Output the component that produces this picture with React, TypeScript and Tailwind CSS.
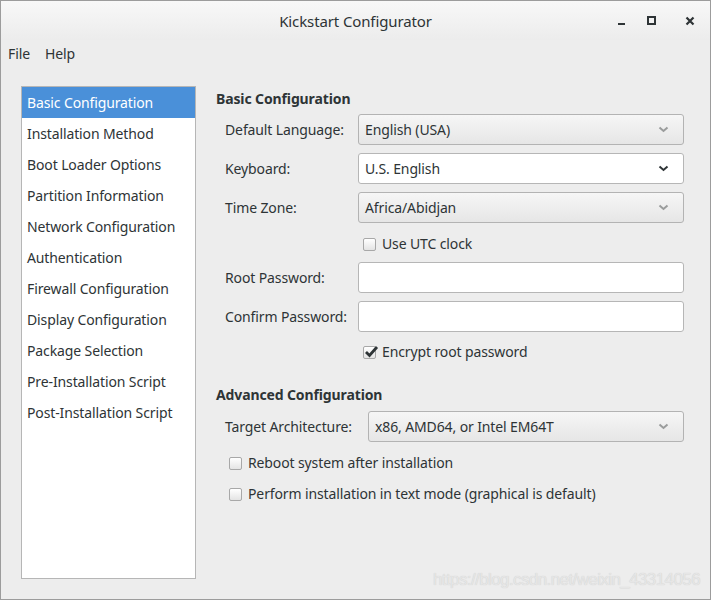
import React from "react";

const sections = [
  "Basic Configuration",
  "Installation Method",
  "Boot Loader Options",
  "Partition Information",
  "Network Configuration",
  "Authentication",
  "Firewall Configuration",
  "Display Configuration",
  "Package Selection",
  "Pre-Installation Script",
  "Post-Installation Script",
];

const Chevron = ({ dark }: { dark?: boolean }) => (
  <svg width="11" height="7" viewBox="0 0 11 7" className="shrink-0">
    <path
      d="M1.5 1.5 L5.5 5 L9.5 1.5"
      fill="none"
      stroke={dark ? "#2e3436" : "#9a9c9c"}
      strokeWidth="2"
    />
  </svg>
);

const Combo = ({ value, dark }: { value: string; dark?: boolean }) => (
  <div
    className={
      "flex items-center justify-between h-[31px] px-[6px] pr-[14px] rounded-[3px] border " +
      (dark
        ? "bg-white border-[#b6b6b6]"
        : "bg-gradient-to-b from-[#f6f6f6] to-[#e6e6e6] border-[#b3b3b3]")
    }
  >
    <span>{value}</span>
    <Chevron dark={dark} />
  </div>
);

const Entry = () => (
  <div className="h-[31px] rounded-[3px] border border-[#b6b6b6] bg-white" />
);

const Check = ({ label, checked }: { label: string; checked?: boolean }) => (
  <div className="flex items-center h-[20px] gap-[6px]">
    <div className="relative w-[13px] h-[13px] rounded-[2px] border border-[#a8a8a8] bg-gradient-to-b from-white to-[#e4e4e4]">
      {checked && (
        <svg
          width="15"
          height="13"
          viewBox="0 0 15 13"
          className="absolute left-[0px] top-[-2px]"
        >
          <path
            d="M2 7 L5.5 10.5 L13 2"
            fill="none"
            stroke="#2e3436"
            strokeWidth="2.8"
          />
        </svg>
      )}
    </div>
    <span>{label}</span>
  </div>
);

export default function App() {
  return (
    <div
      className="w-[711px] h-[600px] flex flex-col bg-[#ededed] border border-[#9c9c9c] text-[#2e3436] text-[14px] leading-[20px] tracking-[-0.12px] overflow-hidden"
      style={{ fontFamily: '"Noto Sans", sans-serif' }}
    >
      {/* Title bar */}
      <div className="h-[39px] grid grid-cols-[1fr_auto_1fr] items-center bg-gradient-to-b from-[#f8f8f8] to-[#ececec]">
        <div />
        <div className="text-[15px] text-[#2e3436]">Kickstart Configurator</div>
        <div className="flex justify-end items-center pr-[15px]">
          <div className="w-[7px] h-[2px] bg-[#2e3436] mt-[6px]" />
          <div className="w-[9px] h-[9px] border-2 border-[#2e3436] ml-[22px]" />
          <svg width="10" height="10" viewBox="0 0 10 10" className="ml-[29px]">
            <path d="M1.5 1.5 L8.5 8.5 M8.5 1.5 L1.5 8.5" stroke="#2e3436" strokeWidth="2.2" />
          </svg>
        </div>
      </div>

      {/* Menu bar */}
      <div className="h-[28px] flex items-center gap-[15px] px-[7px]">
        <span>File</span>
        <span>Help</span>
      </div>

      {/* Body */}
      <div className="flex-1 flex pt-[18px] pb-[20px] pl-[20px] pr-[26px] relative">
        <div className="w-[175px] border border-[#b6b6b6] bg-white">
          {sections.map((s, i) => (
            <div
              key={s}
              className={
                "h-[31px] flex items-center px-[5px] " +
                (i === 0 ? "bg-[#4a90d9] text-white" : "")
              }
            >
              {s}
            </div>
          ))}
        </div>

        <div className="flex-1 ml-[20px] flex flex-col">
          <div className="font-bold mt-[3px] mb-[5px]">Basic Configuration</div>
          <div className="pl-[9px] grid grid-cols-[133px_1fr] gap-y-[8px] items-center">
            <span>Default Language:</span>
            <Combo value="English (USA)" />
            <span>Keyboard:</span>
            <Combo value="U.S. English" dark />
            <span>Time Zone:</span>
            <Combo value="Africa/Abidjan" />
          </div>
          <div className="pl-[147px] mt-[11px]">
            <Check label="Use UTC clock" />
          </div>
          <div className="pl-[9px] mt-[8px] grid grid-cols-[133px_1fr] gap-y-[8px] items-center">
            <span>Root Password:</span>
            <Entry />
            <span>Confirm Password:</span>
            <Entry />
          </div>
          <div className="pl-[147px] mt-[10px]">
            <Check label="Encrypt root password" checked />
          </div>

          <div className="font-bold mt-[23px] mb-[6px]">Advanced Configuration</div>
          <div className="pl-[9px] grid grid-cols-[143px_1fr] items-center">
            <span>Target Architecture:</span>
            <Combo value="x86, AMD64, or Intel EM64T" />
          </div>
          <div className="pl-[13px] mt-[11px] flex flex-col gap-[11px]">
            <Check label="Reboot system after installation" />
            <Check label="Perform installation in text mode (graphical is default)" />
          </div>
        </div>

        <div
          className="absolute right-[10px] bottom-[9px] text-[17px] leading-[20px] text-[#e6e6e6] tracking-[-0.6px]"
          style={{ fontFamily: '"Liberation Sans", sans-serif', textShadow: "0 0 1px #c8c8c8" }}
        >
          https://blog.csdn.net/weixin_43314056
        </div>
      </div>
    </div>
  );
}
